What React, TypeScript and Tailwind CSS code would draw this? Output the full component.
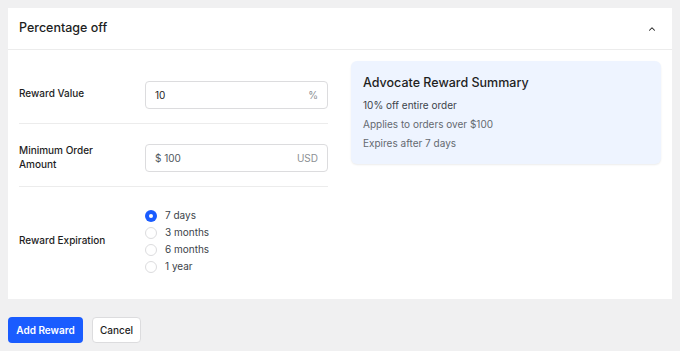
import { useState } from "react";

const ChevronUp = () => (
  <svg width="10" height="10" viewBox="0 0 24 24" fill="none" stroke="currentColor" strokeWidth="2.5" strokeLinecap="round" strokeLinejoin="round">
    <path d="M6 15l6-6 6 6" />
  </svg>
);

const options = ["7 days", "3 months", "6 months", "1 year"];

const App = () => {
  const [expiry, setExpiry] = useState("7 days");

  return (
    <div className="min-h-screen bg-[#f0f0f1] p-2 font-['Inter',sans-serif] text-[#1d2327]">
      {/* Card */}
      <div className="bg-white">
        <div className="flex h-[42px] items-center justify-between border-b border-[#ececec] px-[11px]">
          <h2 className="text-[12.5px] font-medium text-[#1e1e1e]">Percentage off</h2>
          <span className="mr-[4px] text-[#1e1e1e]">
            <ChevronUp />
          </span>
        </div>

        <div className="flex gap-[23px] p-[11px]">
          {/* Form */}
          <div className="w-[309px] shrink-0">
            <div className="flex items-center border-b border-[#ececec] pt-5 pb-[14px]">
              <label className="w-[126px] shrink-0 -translate-y-[2px] text-[10px] leading-[14px] font-medium text-[#1e1e1e]">Reward Value</label>
              <div className="flex h-[28px] flex-1 items-center justify-between rounded-[4px] border border-[#dcdcde] px-[9px] text-[10px]">
                <span className="text-[#1e1e1e]">10</span>
                <span className="text-[#8c8f94]">%</span>
              </div>
            </div>

            <div className="flex items-center border-b border-[#ececec] pt-5 pb-[14px]">
              <label className="w-[126px] shrink-0 -translate-y-[1px] pr-8 text-[10px] leading-[14px] font-medium text-[#1e1e1e]">Minimum Order Amount</label>
              <div className="flex h-[28px] flex-1 items-center justify-between rounded-[4px] border border-[#dcdcde] px-[9px] text-[10px]">
                <span className="text-[#50575e]">$ 100</span>
                <span className="text-[#8c8f94]">USD</span>
              </div>
            </div>

            <div className="flex items-center pt-5 pb-[13px]">
              <label className="w-[126px] shrink-0 -translate-y-[1px] text-[10px] leading-[14px] font-medium text-[#1e1e1e]">Reward Expiration</label>
              <div className="flex flex-col">
                {options.map((o) => (
                  <label key={o} className="flex h-[17px] cursor-pointer items-center gap-[8px] text-[10px] text-[#3c434a]" onClick={() => setExpiry(o)}>
                    {expiry === o ? (
                      <span className="flex h-[12px] w-[12px] items-center justify-center rounded-full bg-[#1a5cff]">
                        <span className="h-[4px] w-[4px] rounded-full bg-white"></span>
                      </span>
                    ) : (
                      <span className="h-[12px] w-[12px] rounded-full border border-[#dcdcde] bg-white"></span>
                    )}
                    {o}
                  </label>
                ))}
              </div>
            </div>
          </div>

          {/* Summary */}
          <div className="h-[103px] flex-1 rounded-[6px] bg-[#eef4ff] px-3 pt-[14px] shadow-[0_1px_2px_rgba(0,0,0,0.08)]">
            <h3 className="text-[12.5px] leading-[16px] font-medium text-[#1e1e1e]">Advocate Reward Summary</h3>
            <p className="mt-[5px] text-[10px] leading-[19px] text-[#3c434a]">10% off entire order</p>
            <p className="text-[10px] leading-[19px] text-[#646970]">Applies to orders over $100</p>
            <p className="text-[10px] leading-[19px] text-[#646970]">Expires after 7 days</p>
          </div>
        </div>
      </div>

      {/* Actions */}
      <div className="mt-[18px] flex gap-[9px]">
        <button className="h-[26px] w-[75px] rounded-[4px] bg-[#1a5cff] text-[10px] font-semibold text-white">Add Reward</button>
        <button className="h-[26px] w-[49px] rounded-[4px] border border-[#dcdcde] bg-white text-[10px] font-medium text-[#1e1e1e]">Cancel</button>
      </div>
    </div>
  );
};

export default App;
